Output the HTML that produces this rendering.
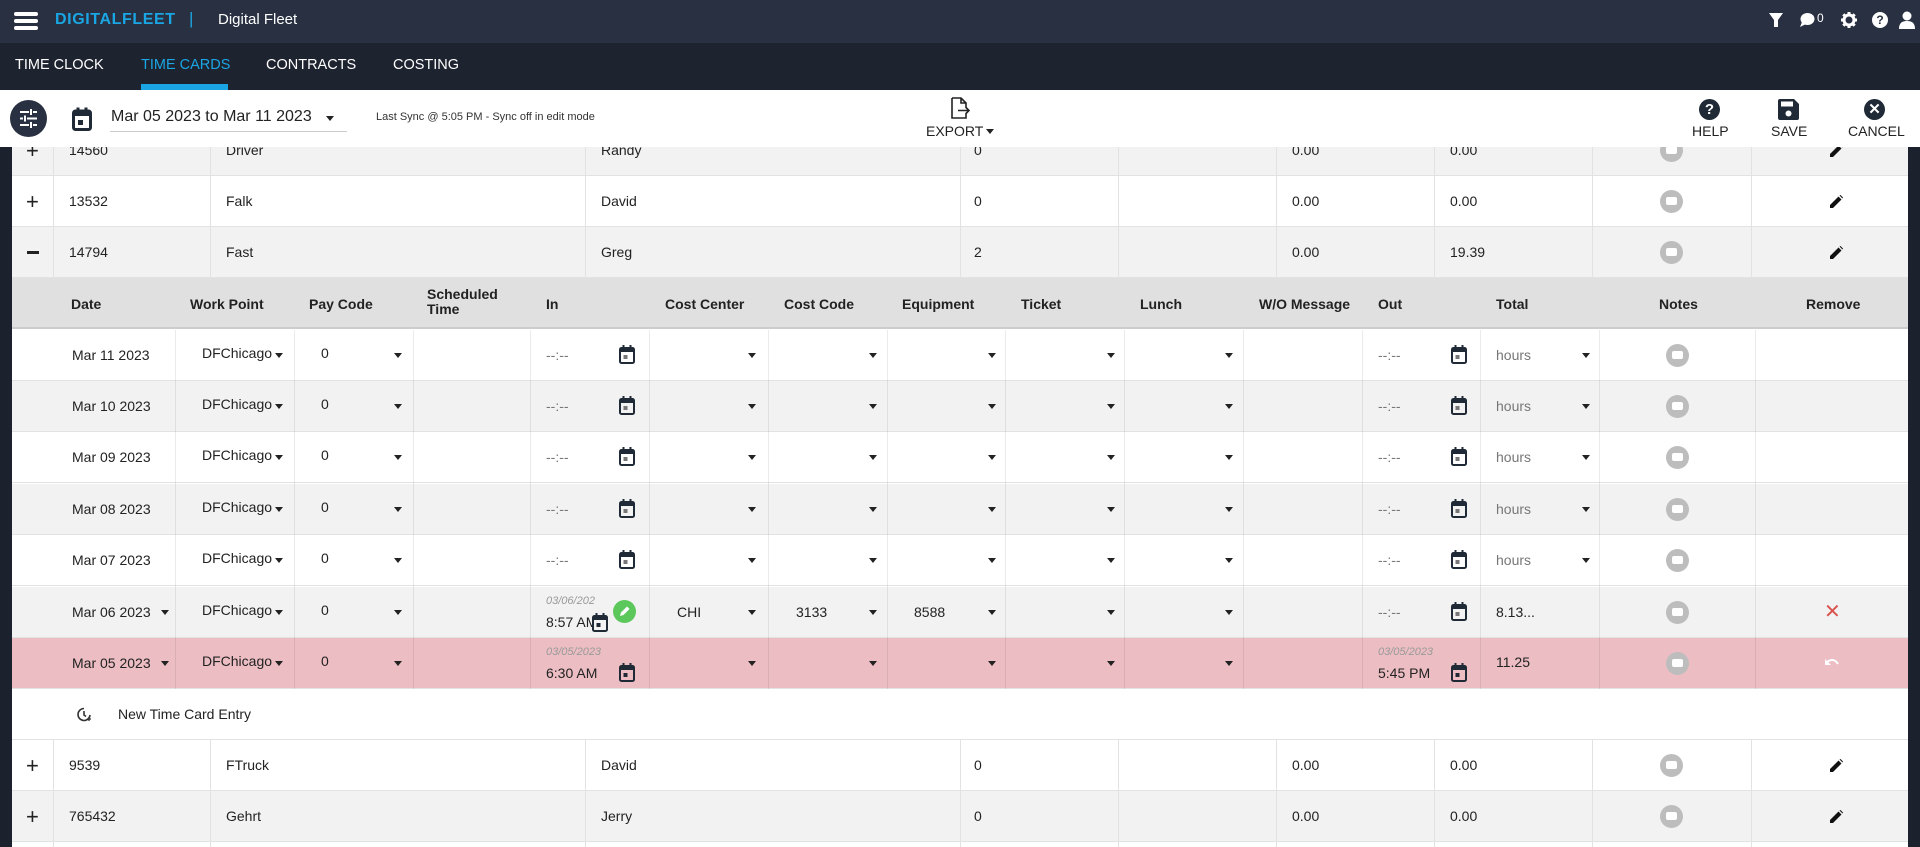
<!DOCTYPE html>
<html><head><meta charset="utf-8">
<style>
*{box-sizing:border-box;margin:0;padding:0}
html,body{width:1920px;height:847px;overflow:hidden}
body{position:relative;background:#fff;font-family:"Liberation Sans",Arial,sans-serif;color:#222;font-size:14px}
.a{position:absolute}
.top{left:0;top:0;width:1920px;height:43px;background:#283041}
.nav{left:0;top:43px;width:1920px;height:47px;background:#1e2330}
.nav span{position:absolute;top:14px;color:#fff;font-size:14.5px}
.tb{left:0;top:90px;width:1920px;height:57px;background:#fff;z-index:5}
.side{top:147px;width:12px;height:700px;background:#1c222d;z-index:6}
.row{position:absolute;left:11px;width:1897px;height:51px;border-bottom:1px solid #e2e2e2}
.g{background:#f2f2f2}.w{background:#fff}.p{background:#ecbec3}
.t{position:absolute;top:0;line-height:51px;white-space:nowrap}
.gr{color:#777}
.arr{position:absolute;top:23px;width:0;height:0;border-left:4px solid transparent;border-right:4px solid transparent;border-top:5px solid #222}
.cal{position:absolute;top:15px}
.nb{position:absolute;top:14px;width:23px;height:23px;border-radius:50%;background:#bdbdbd}
.nb:after{content:"";position:absolute;left:6px;top:7px;width:11px;height:8px;background:#fff;border-radius:2px}
.vl{position:absolute;width:1px;background:#e2e2e2}
.sm{position:absolute;top:8px;font-size:11px;font-style:italic;color:#999}
.tm{position:absolute;top:27px;font-size:14px}
.hd{position:absolute;font-weight:bold;font-size:14px;color:#222}
.pen{position:absolute;left:1819px;top:19px}
</style></head><body>
<div class="a top">
 <div class="a" style="left:14px;top:12px;width:24px;height:4px;background:#fff;border-radius:2px"></div>
 <div class="a" style="left:14px;top:19px;width:24px;height:4px;background:#fff;border-radius:2px"></div>
 <div class="a" style="left:14px;top:26px;width:24px;height:4px;background:#fff;border-radius:2px"></div>
 <div class="a" style="left:55px;top:11px;color:#1aa6e4;font-weight:bold;font-size:16px;letter-spacing:0.6px">DIGITALFLEET</div>
 <div class="a" style="left:189px;top:9px;color:#1aa6e4;font-size:17px">|</div>
 <div class="a" style="left:218px;top:11px;color:#fff;font-size:15px">Digital Fleet</div>
 <svg class="a" style="left:1768px;top:12px" width="16" height="16" viewBox="0 0 16 16"><path d="M1 1h14l-5 7v7h-4V8z" fill="#fff"/></svg>
 <svg class="a" style="left:1799px;top:12px" width="16" height="16" viewBox="0 0 16 16"><ellipse cx="8.5" cy="7" rx="7" ry="6" fill="#fff"/><path d="M3 10l-2 5 6-3z" fill="#fff"/></svg>
 <div class="a" style="left:1817px;top:11px;color:#fff;font-size:12px">0</div>
 <svg class="a" style="left:1841px;top:12px" width="16" height="16" viewBox="0 0 16 16"><circle cx="8" cy="8" r="5" fill="none" stroke="#fff" stroke-width="3"/><g stroke="#fff" stroke-width="3"><path d="M8 0v4M8 12v4M0 8h4M12 8h4M2.3 2.3l2.8 2.8M10.9 10.9l2.8 2.8M2.3 13.7l2.8-2.8M10.9 5.1l2.8-2.8"/></g></svg>
 <div class="a" style="left:1872px;top:12px;width:16px;height:16px;border-radius:50%;background:#fff;color:#283041;font-weight:bold;font-size:12px;text-align:center;line-height:16px">?</div>
 <svg class="a" style="left:1899px;top:11px" width="16" height="18" viewBox="0 0 16 18"><circle cx="8" cy="5" r="4.5" fill="#fff"/><path d="M0 18c0-6 3-8 8-8s8 2 8 8z" fill="#fff"/></svg>
</div>
<div class="a nav">
 <span style="left:15px">TIME CLOCK</span>
 <span style="left:141px;color:#1aa6e4">TIME CARDS</span>
 <span style="left:266px">CONTRACTS</span>
 <span style="left:393px">COSTING</span>
 <div class="a" style="left:141px;top:41px;width:87px;height:6px;background:#1aa6e4"></div>
</div>
<div class="a tb">
 <div class="a" style="left:10px;top:10px;width:37px;height:37px;border-radius:50%;background:#283041"></div>
 <svg class="a" style="left:19px;top:19px" width="19" height="19" viewBox="0 0 19 19" stroke="#fff" stroke-width="2"><path d="M1 3h9M14 3h4M12 0v6M1 9.5h3M8 9.5h10M6 6.5v6M1 16h9M14 16h4M12 13v6"/></svg>
 <svg class="a" style="left:72px;top:17px" width="20" height="24" viewBox="0 0 20 24"><rect x="1.5" y="4" width="17" height="18.5" rx="2" fill="none" stroke="#1f2a36" stroke-width="3"/><rect x="1.5" y="4" width="17" height="5" fill="#1f2a36"/><rect x="4.5" y="0.5" width="3" height="5" fill="#1f2a36"/><rect x="12.5" y="0.5" width="3" height="5" fill="#1f2a36"/><rect x="6" y="13" width="5" height="5" fill="#1f2a36"/></svg>
 <div class="a" style="left:111px;top:18px;font-size:16px;color:#222">Mar 05 2023 to Mar 11 2023</div>
 <div class="a" style="left:110px;top:41px;width:237px;height:1px;background:#ccc"></div>
 <div class="arr" style="left:326px;top:26px"></div>
 <div class="a" style="left:376px;top:21px;font-size:11px;color:#333">Last Sync @ 5:05 PM - Sync off in edit mode</div>
 <svg class="a" style="left:950px;top:7px" width="20" height="22" viewBox="0 0 20 22" fill="none" stroke="#222" stroke-width="1.6"><path d="M2 1h9l5 5v5M16 16v5H2V1M11 1v5h5M8 13.5h11M16 10.5l3 3-3 3"/></svg>
 <div class="a" style="left:926px;top:33px;font-size:14px;color:#222">EXPORT</div>
 <div class="arr" style="left:986px;top:39px"></div>
 <div class="a" style="left:1699px;top:9px;width:21px;height:21px;border-radius:50%;background:#1f2a36;color:#fff;font-weight:bold;font-size:15px;text-align:center;line-height:21px">?</div>
 <div class="a" style="left:1692px;top:33px;font-size:14px">HELP</div>
 <svg class="a" style="left:1778px;top:9px" width="21" height="21" viewBox="0 0 21 21"><path d="M0 2a2 2 0 0 1 2-2h14l5 5v14a2 2 0 0 1-2 2H2a2 2 0 0 1-2-2z" fill="#1f2a36"/><rect x="3" y="2.5" width="12" height="5" fill="#fff"/><circle cx="10.5" cy="14.5" r="3" fill="#fff"/></svg>
 <div class="a" style="left:1771px;top:33px;font-size:14px">SAVE</div>
 <div class="a" style="left:1864px;top:9px;width:21px;height:21px;border-radius:50%;background:#1f2a36;color:#fff;font-weight:bold;font-size:15px;text-align:center;line-height:21px">✕</div>
 <div class="a" style="left:1848px;top:33px;font-size:14px">CANCEL</div>
</div>
<div class="a side" style="left:0"></div>
<div class="a side" style="left:1908px"></div>

<!-- main rows -->
<div class="row g" style="top:125px"><span class="t" style="left:15px;font-size:22px">+</span><span class="t" style="left:58px">14560</span><span class="t" style="left:215px">Driver</span><span class="t" style="left:590px">Randy</span><span class="t" style="left:963px">0</span><span class="t" style="left:1281px">0.00</span><span class="t" style="left:1439px">0.00</span><span class="nb" style="left:1649px"></span><svg class="pen" width="13" height="13" viewBox="0 0 13 13"><path d="M0 13v-3L8.5 1.5l3 3L3 13z M9.5 0.5l1-0.5 2.5 2.5-0.5 1z" fill="#111"/></svg></div>
<div class="row w" style="top:176px"><span class="t" style="left:15px;font-size:22px">+</span><span class="t" style="left:58px">13532</span><span class="t" style="left:215px">Falk</span><span class="t" style="left:590px">David</span><span class="t" style="left:963px">0</span><span class="t" style="left:1281px">0.00</span><span class="t" style="left:1439px">0.00</span><span class="nb" style="left:1649px"></span><svg class="pen" width="13" height="13" viewBox="0 0 13 13"><path d="M0 13v-3L8.5 1.5l3 3L3 13z M9.5 0.5l1-0.5 2.5 2.5-0.5 1z" fill="#111"/></svg></div>
<div class="row g" style="top:227px"><span class="a" style="left:16px;top:24px;width:12px;height:3px;background:#222"></span><span class="t" style="left:58px">14794</span><span class="t" style="left:215px">Fast</span><span class="t" style="left:590px">Greg</span><span class="t" style="left:963px">2</span><span class="t" style="left:1281px">0.00</span><span class="t" style="left:1439px">19.39</span><span class="nb" style="left:1649px"></span><svg class="pen" width="13" height="13" viewBox="0 0 13 13"><path d="M0 13v-3L8.5 1.5l3 3L3 13z M9.5 0.5l1-0.5 2.5 2.5-0.5 1z" fill="#111"/></svg></div>
<div class="row w" style="top:740px"><span class="t" style="left:15px;font-size:22px">+</span><span class="t" style="left:58px">9539</span><span class="t" style="left:215px">FTruck</span><span class="t" style="left:590px">David</span><span class="t" style="left:963px">0</span><span class="t" style="left:1281px">0.00</span><span class="t" style="left:1439px">0.00</span><span class="nb" style="left:1649px"></span><svg class="pen" width="13" height="13" viewBox="0 0 13 13"><path d="M0 13v-3L8.5 1.5l3 3L3 13z M9.5 0.5l1-0.5 2.5 2.5-0.5 1z" fill="#111"/></svg></div>
<div class="row g" style="top:791px"><span class="t" style="left:15px;font-size:22px">+</span><span class="t" style="left:58px">765432</span><span class="t" style="left:215px">Gehrt</span><span class="t" style="left:590px">Jerry</span><span class="t" style="left:963px">0</span><span class="t" style="left:1281px">0.00</span><span class="t" style="left:1439px">0.00</span><span class="nb" style="left:1649px"></span><svg class="pen" width="13" height="13" viewBox="0 0 13 13"><path d="M0 13v-3L8.5 1.5l3 3L3 13z M9.5 0.5l1-0.5 2.5 2.5-0.5 1z" fill="#111"/></svg></div>
<div class="row w" style="top:842px;height:5px;border:none"></div>

<!-- sub header -->
<div class="row" style="top:278px;background:#e0e0e0;border-bottom:2px solid #ccc">
 <span class="hd" style="left:60px;top:18px">Date</span>
 <span class="hd" style="left:179px;top:18px">Work Point</span>
 <span class="hd" style="left:298px;top:18px">Pay Code</span>
 <span class="hd" style="left:416px;top:9px;line-height:15px">Scheduled<br>Time</span>
 <span class="hd" style="left:535px;top:18px">In</span>
 <span class="hd" style="left:654px;top:18px">Cost Center</span>
 <span class="hd" style="left:773px;top:18px">Cost Code</span>
 <span class="hd" style="left:891px;top:18px">Equipment</span>
 <span class="hd" style="left:1010px;top:18px">Ticket</span>
 <span class="hd" style="left:1129px;top:18px">Lunch</span>
 <span class="hd" style="left:1248px;top:18px">W/O Message</span>
 <span class="hd" style="left:1367px;top:18px">Out</span>
 <span class="hd" style="left:1485px;top:18px">Total</span>
 <span class="hd" style="left:1648px;top:18px">Notes</span>
 <span class="hd" style="left:1795px;top:18px">Remove</span>
</div>

<!-- sub rows -->
<div class="row w" style="top:330px"><span class="t" style="left:61px">Mar 11 2023</span><span class="t" style="left:191px;top:-2px">DFChicago</span><span class="arr" style="left:264px"></span><span class="t" style="left:310px;top:-2px">0</span><span class="arr" style="left:383px"></span><span class="t gr" style="left:535px">--:--</span><svg class="cal" style="left:608px" width="16" height="19" viewBox="0 0 16 19"><rect x="1" y="3" width="14" height="15" rx="1.5" fill="none" stroke="#1f2a36" stroke-width="2"/><rect x="1" y="3" width="14" height="4" fill="#1f2a36"/><rect x="3.5" y="0" width="2" height="4" fill="#1f2a36"/><rect x="10.5" y="0" width="2" height="4" fill="#1f2a36"/><rect x="4.5" y="10" width="4" height="4" fill="#777"/></svg><span class="arr" style="left:737px"></span><span class="arr" style="left:858px"></span><span class="arr" style="left:977px"></span><span class="arr" style="left:1096px"></span><span class="arr" style="left:1214px"></span><span class="t gr" style="left:1367px">--:--</span><svg class="cal" style="left:1440px" width="16" height="19" viewBox="0 0 16 19"><rect x="1" y="3" width="14" height="15" rx="1.5" fill="none" stroke="#1f2a36" stroke-width="2"/><rect x="1" y="3" width="14" height="4" fill="#1f2a36"/><rect x="3.5" y="0" width="2" height="4" fill="#1f2a36"/><rect x="10.5" y="0" width="2" height="4" fill="#1f2a36"/><rect x="4.5" y="10" width="4" height="4" fill="#777"/></svg><span class="t gr" style="left:1485px">hours</span><span class="arr" style="left:1571px"></span><span class="nb" style="left:1655px"></span></div>
<div class="row g" style="top:381px"><span class="t" style="left:61px">Mar 10 2023</span><span class="t" style="left:191px;top:-2px">DFChicago</span><span class="arr" style="left:264px"></span><span class="t" style="left:310px;top:-2px">0</span><span class="arr" style="left:383px"></span><span class="t gr" style="left:535px">--:--</span><svg class="cal" style="left:608px" width="16" height="19" viewBox="0 0 16 19"><rect x="1" y="3" width="14" height="15" rx="1.5" fill="none" stroke="#1f2a36" stroke-width="2"/><rect x="1" y="3" width="14" height="4" fill="#1f2a36"/><rect x="3.5" y="0" width="2" height="4" fill="#1f2a36"/><rect x="10.5" y="0" width="2" height="4" fill="#1f2a36"/><rect x="4.5" y="10" width="4" height="4" fill="#777"/></svg><span class="arr" style="left:737px"></span><span class="arr" style="left:858px"></span><span class="arr" style="left:977px"></span><span class="arr" style="left:1096px"></span><span class="arr" style="left:1214px"></span><span class="t gr" style="left:1367px">--:--</span><svg class="cal" style="left:1440px" width="16" height="19" viewBox="0 0 16 19"><rect x="1" y="3" width="14" height="15" rx="1.5" fill="none" stroke="#1f2a36" stroke-width="2"/><rect x="1" y="3" width="14" height="4" fill="#1f2a36"/><rect x="3.5" y="0" width="2" height="4" fill="#1f2a36"/><rect x="10.5" y="0" width="2" height="4" fill="#1f2a36"/><rect x="4.5" y="10" width="4" height="4" fill="#777"/></svg><span class="t gr" style="left:1485px">hours</span><span class="arr" style="left:1571px"></span><span class="nb" style="left:1655px"></span></div>
<div class="row w" style="top:432px"><span class="t" style="left:61px">Mar 09 2023</span><span class="t" style="left:191px;top:-2px">DFChicago</span><span class="arr" style="left:264px"></span><span class="t" style="left:310px;top:-2px">0</span><span class="arr" style="left:383px"></span><span class="t gr" style="left:535px">--:--</span><svg class="cal" style="left:608px" width="16" height="19" viewBox="0 0 16 19"><rect x="1" y="3" width="14" height="15" rx="1.5" fill="none" stroke="#1f2a36" stroke-width="2"/><rect x="1" y="3" width="14" height="4" fill="#1f2a36"/><rect x="3.5" y="0" width="2" height="4" fill="#1f2a36"/><rect x="10.5" y="0" width="2" height="4" fill="#1f2a36"/><rect x="4.5" y="10" width="4" height="4" fill="#777"/></svg><span class="arr" style="left:737px"></span><span class="arr" style="left:858px"></span><span class="arr" style="left:977px"></span><span class="arr" style="left:1096px"></span><span class="arr" style="left:1214px"></span><span class="t gr" style="left:1367px">--:--</span><svg class="cal" style="left:1440px" width="16" height="19" viewBox="0 0 16 19"><rect x="1" y="3" width="14" height="15" rx="1.5" fill="none" stroke="#1f2a36" stroke-width="2"/><rect x="1" y="3" width="14" height="4" fill="#1f2a36"/><rect x="3.5" y="0" width="2" height="4" fill="#1f2a36"/><rect x="10.5" y="0" width="2" height="4" fill="#1f2a36"/><rect x="4.5" y="10" width="4" height="4" fill="#777"/></svg><span class="t gr" style="left:1485px">hours</span><span class="arr" style="left:1571px"></span><span class="nb" style="left:1655px"></span></div>
<div class="row g" style="top:484px"><span class="t" style="left:61px">Mar 08 2023</span><span class="t" style="left:191px;top:-2px">DFChicago</span><span class="arr" style="left:264px"></span><span class="t" style="left:310px;top:-2px">0</span><span class="arr" style="left:383px"></span><span class="t gr" style="left:535px">--:--</span><svg class="cal" style="left:608px" width="16" height="19" viewBox="0 0 16 19"><rect x="1" y="3" width="14" height="15" rx="1.5" fill="none" stroke="#1f2a36" stroke-width="2"/><rect x="1" y="3" width="14" height="4" fill="#1f2a36"/><rect x="3.5" y="0" width="2" height="4" fill="#1f2a36"/><rect x="10.5" y="0" width="2" height="4" fill="#1f2a36"/><rect x="4.5" y="10" width="4" height="4" fill="#777"/></svg><span class="arr" style="left:737px"></span><span class="arr" style="left:858px"></span><span class="arr" style="left:977px"></span><span class="arr" style="left:1096px"></span><span class="arr" style="left:1214px"></span><span class="t gr" style="left:1367px">--:--</span><svg class="cal" style="left:1440px" width="16" height="19" viewBox="0 0 16 19"><rect x="1" y="3" width="14" height="15" rx="1.5" fill="none" stroke="#1f2a36" stroke-width="2"/><rect x="1" y="3" width="14" height="4" fill="#1f2a36"/><rect x="3.5" y="0" width="2" height="4" fill="#1f2a36"/><rect x="10.5" y="0" width="2" height="4" fill="#1f2a36"/><rect x="4.5" y="10" width="4" height="4" fill="#777"/></svg><span class="t gr" style="left:1485px">hours</span><span class="arr" style="left:1571px"></span><span class="nb" style="left:1655px"></span></div>
<div class="row w" style="top:535px"><span class="t" style="left:61px">Mar 07 2023</span><span class="t" style="left:191px;top:-2px">DFChicago</span><span class="arr" style="left:264px"></span><span class="t" style="left:310px;top:-2px">0</span><span class="arr" style="left:383px"></span><span class="t gr" style="left:535px">--:--</span><svg class="cal" style="left:608px" width="16" height="19" viewBox="0 0 16 19"><rect x="1" y="3" width="14" height="15" rx="1.5" fill="none" stroke="#1f2a36" stroke-width="2"/><rect x="1" y="3" width="14" height="4" fill="#1f2a36"/><rect x="3.5" y="0" width="2" height="4" fill="#1f2a36"/><rect x="10.5" y="0" width="2" height="4" fill="#1f2a36"/><rect x="4.5" y="10" width="4" height="4" fill="#777"/></svg><span class="arr" style="left:737px"></span><span class="arr" style="left:858px"></span><span class="arr" style="left:977px"></span><span class="arr" style="left:1096px"></span><span class="arr" style="left:1214px"></span><span class="t gr" style="left:1367px">--:--</span><svg class="cal" style="left:1440px" width="16" height="19" viewBox="0 0 16 19"><rect x="1" y="3" width="14" height="15" rx="1.5" fill="none" stroke="#1f2a36" stroke-width="2"/><rect x="1" y="3" width="14" height="4" fill="#1f2a36"/><rect x="3.5" y="0" width="2" height="4" fill="#1f2a36"/><rect x="10.5" y="0" width="2" height="4" fill="#1f2a36"/><rect x="4.5" y="10" width="4" height="4" fill="#777"/></svg><span class="t gr" style="left:1485px">hours</span><span class="arr" style="left:1571px"></span><span class="nb" style="left:1655px"></span></div>
<div class="row g" style="top:587px"><span class="t" style="left:61px">Mar 06 2023</span><span class="arr" style="left:150px"></span><span class="t" style="left:191px;top:-2px">DFChicago</span><span class="arr" style="left:264px"></span><span class="t" style="left:310px;top:-2px">0</span><span class="arr" style="left:383px"></span><span class="sm" style="left:535px">03/06/202</span><span class="tm" style="left:535px">8:57 AM</span><svg class="cal" style="left:581px;top:26px" width="16" height="19" viewBox="0 0 16 19"><rect x="1" y="3" width="14" height="15" rx="1.5" fill="#f2f2f2" stroke="#1f2a36" stroke-width="2"/><rect x="1" y="3" width="14" height="4" fill="#1f2a36"/><rect x="3.5" y="0" width="2" height="4" fill="#1f2a36"/><rect x="10.5" y="0" width="2" height="4" fill="#1f2a36"/><rect x="4.5" y="10" width="4" height="4" fill="#1f2a36"/></svg><svg class="a" style="left:602px;top:13px" width="23" height="23" viewBox="0 0 23 23"><circle cx="11.5" cy="11.5" r="11.5" fill="#5cc85c"/><path d="M7 16l1-3.5 6-6 2.5 2.5-6 6z" fill="#fff"/></svg><span class="t" style="left:666px">CHI</span><span class="arr" style="left:737px"></span><span class="t" style="left:785px">3133</span><span class="arr" style="left:858px"></span><span class="t" style="left:903px">8588</span><span class="arr" style="left:977px"></span><span class="arr" style="left:1096px"></span><span class="arr" style="left:1214px"></span><span class="t gr" style="left:1367px">--:--</span><svg class="cal" style="left:1440px" width="16" height="19" viewBox="0 0 16 19"><rect x="1" y="3" width="14" height="15" rx="1.5" fill="none" stroke="#1f2a36" stroke-width="2"/><rect x="1" y="3" width="14" height="4" fill="#1f2a36"/><rect x="3.5" y="0" width="2" height="4" fill="#1f2a36"/><rect x="10.5" y="0" width="2" height="4" fill="#1f2a36"/><rect x="4.5" y="10" width="4" height="4" fill="#777"/></svg><span class="t" style="left:1485px">8.13...</span><span class="nb" style="left:1655px"></span><span class="t" style="left:1813px;color:#d9534f;font-size:20px">✕</span></div>
<div class="row p" style="top:638px"><span class="t" style="left:61px">Mar 05 2023</span><span class="arr" style="left:150px"></span><span class="t" style="left:191px;top:-2px">DFChicago</span><span class="arr" style="left:264px"></span><span class="t" style="left:310px;top:-2px">0</span><span class="arr" style="left:383px"></span><span class="sm" style="left:535px">03/05/2023</span><span class="tm" style="left:535px">6:30 AM</span><svg class="cal" style="left:608px;top:25px" width="16" height="19" viewBox="0 0 16 19"><rect x="1" y="3" width="14" height="15" rx="1.5" fill="none" stroke="#1f2a36" stroke-width="2"/><rect x="1" y="3" width="14" height="4" fill="#1f2a36"/><rect x="3.5" y="0" width="2" height="4" fill="#1f2a36"/><rect x="10.5" y="0" width="2" height="4" fill="#1f2a36"/><rect x="4.5" y="10" width="4" height="4" fill="#1f2a36"/></svg><span class="arr" style="left:737px"></span><span class="arr" style="left:858px"></span><span class="arr" style="left:977px"></span><span class="arr" style="left:1096px"></span><span class="arr" style="left:1214px"></span><span class="sm" style="left:1367px">03/05/2023</span><span class="tm" style="left:1367px">5:45 PM</span><svg class="cal" style="left:1440px;top:25px" width="16" height="19" viewBox="0 0 16 19"><rect x="1" y="3" width="14" height="15" rx="1.5" fill="none" stroke="#1f2a36" stroke-width="2"/><rect x="1" y="3" width="14" height="4" fill="#1f2a36"/><rect x="3.5" y="0" width="2" height="4" fill="#1f2a36"/><rect x="10.5" y="0" width="2" height="4" fill="#1f2a36"/><rect x="4.5" y="10" width="4" height="4" fill="#1f2a36"/></svg><span class="t" style="left:1485px;top:-1px">11.25</span><span class="nb" style="left:1655px"></span><svg class="a" style="left:1814px;top:20px" width="14" height="10" viewBox="0 0 14 10"><path d="M2 4c4-3 8-3 11 2" fill="none" stroke="#fff" stroke-width="2"/><path d="M0 1v6h6z" fill="#fff"/></svg></div>
<div class="row w" style="top:689px"><svg class="a" style="left:66px;top:18px" width="15" height="15" viewBox="0 0 15 15" fill="none" stroke="#333" stroke-width="1.6"><path d="M13 8A6 6 0 1 1 7 1.5M7 4v4l2 1.5"/><path d="M12 10v4M10 12h4" stroke-width="1.3"/></svg><span class="t" style="left:107px">New Time Card Entry</span></div>

<!-- vertical lines main -->
<div class="vl" style="left:53px;top:125px;height:153px"></div><div class="vl" style="left:210px;top:125px;height:153px"></div><div class="vl" style="left:585px;top:125px;height:153px"></div><div class="vl" style="left:960px;top:125px;height:153px"></div><div class="vl" style="left:1118px;top:125px;height:153px"></div><div class="vl" style="left:1276px;top:125px;height:153px"></div><div class="vl" style="left:1434px;top:125px;height:153px"></div><div class="vl" style="left:1592px;top:125px;height:153px"></div><div class="vl" style="left:1751px;top:125px;height:153px"></div>
<div class="vl" style="left:53px;top:740px;height:107px"></div><div class="vl" style="left:210px;top:740px;height:107px"></div><div class="vl" style="left:585px;top:740px;height:107px"></div><div class="vl" style="left:960px;top:740px;height:107px"></div><div class="vl" style="left:1118px;top:740px;height:107px"></div><div class="vl" style="left:1276px;top:740px;height:107px"></div><div class="vl" style="left:1434px;top:740px;height:107px"></div><div class="vl" style="left:1592px;top:740px;height:107px"></div><div class="vl" style="left:1751px;top:740px;height:107px"></div>
<!-- vertical lines sub -->
<div style="position:absolute;left:0;top:330px;width:1908px;height:359px;pointer-events:none">
<div class="vl" style="left:175px;top:0;height:359px;background:rgba(0,0,0,0.08)"></div><div class="vl" style="left:294px;top:0;height:359px;background:rgba(0,0,0,0.08)"></div><div class="vl" style="left:413px;top:0;height:359px;background:rgba(0,0,0,0.08)"></div><div class="vl" style="left:530px;top:0;height:359px;background:rgba(0,0,0,0.08)"></div><div class="vl" style="left:649px;top:0;height:359px;background:rgba(0,0,0,0.08)"></div><div class="vl" style="left:768px;top:0;height:359px;background:rgba(0,0,0,0.08)"></div><div class="vl" style="left:887px;top:0;height:359px;background:rgba(0,0,0,0.08)"></div><div class="vl" style="left:1005px;top:0;height:359px;background:rgba(0,0,0,0.08)"></div><div class="vl" style="left:1124px;top:0;height:359px;background:rgba(0,0,0,0.08)"></div><div class="vl" style="left:1243px;top:0;height:359px;background:rgba(0,0,0,0.08)"></div><div class="vl" style="left:1362px;top:0;height:359px;background:rgba(0,0,0,0.08)"></div><div class="vl" style="left:1480px;top:0;height:359px;background:rgba(0,0,0,0.08)"></div><div class="vl" style="left:1599px;top:0;height:359px;background:rgba(0,0,0,0.08)"></div><div class="vl" style="left:1755px;top:0;height:359px;background:rgba(0,0,0,0.08)"></div>
</div>
</body></html>
